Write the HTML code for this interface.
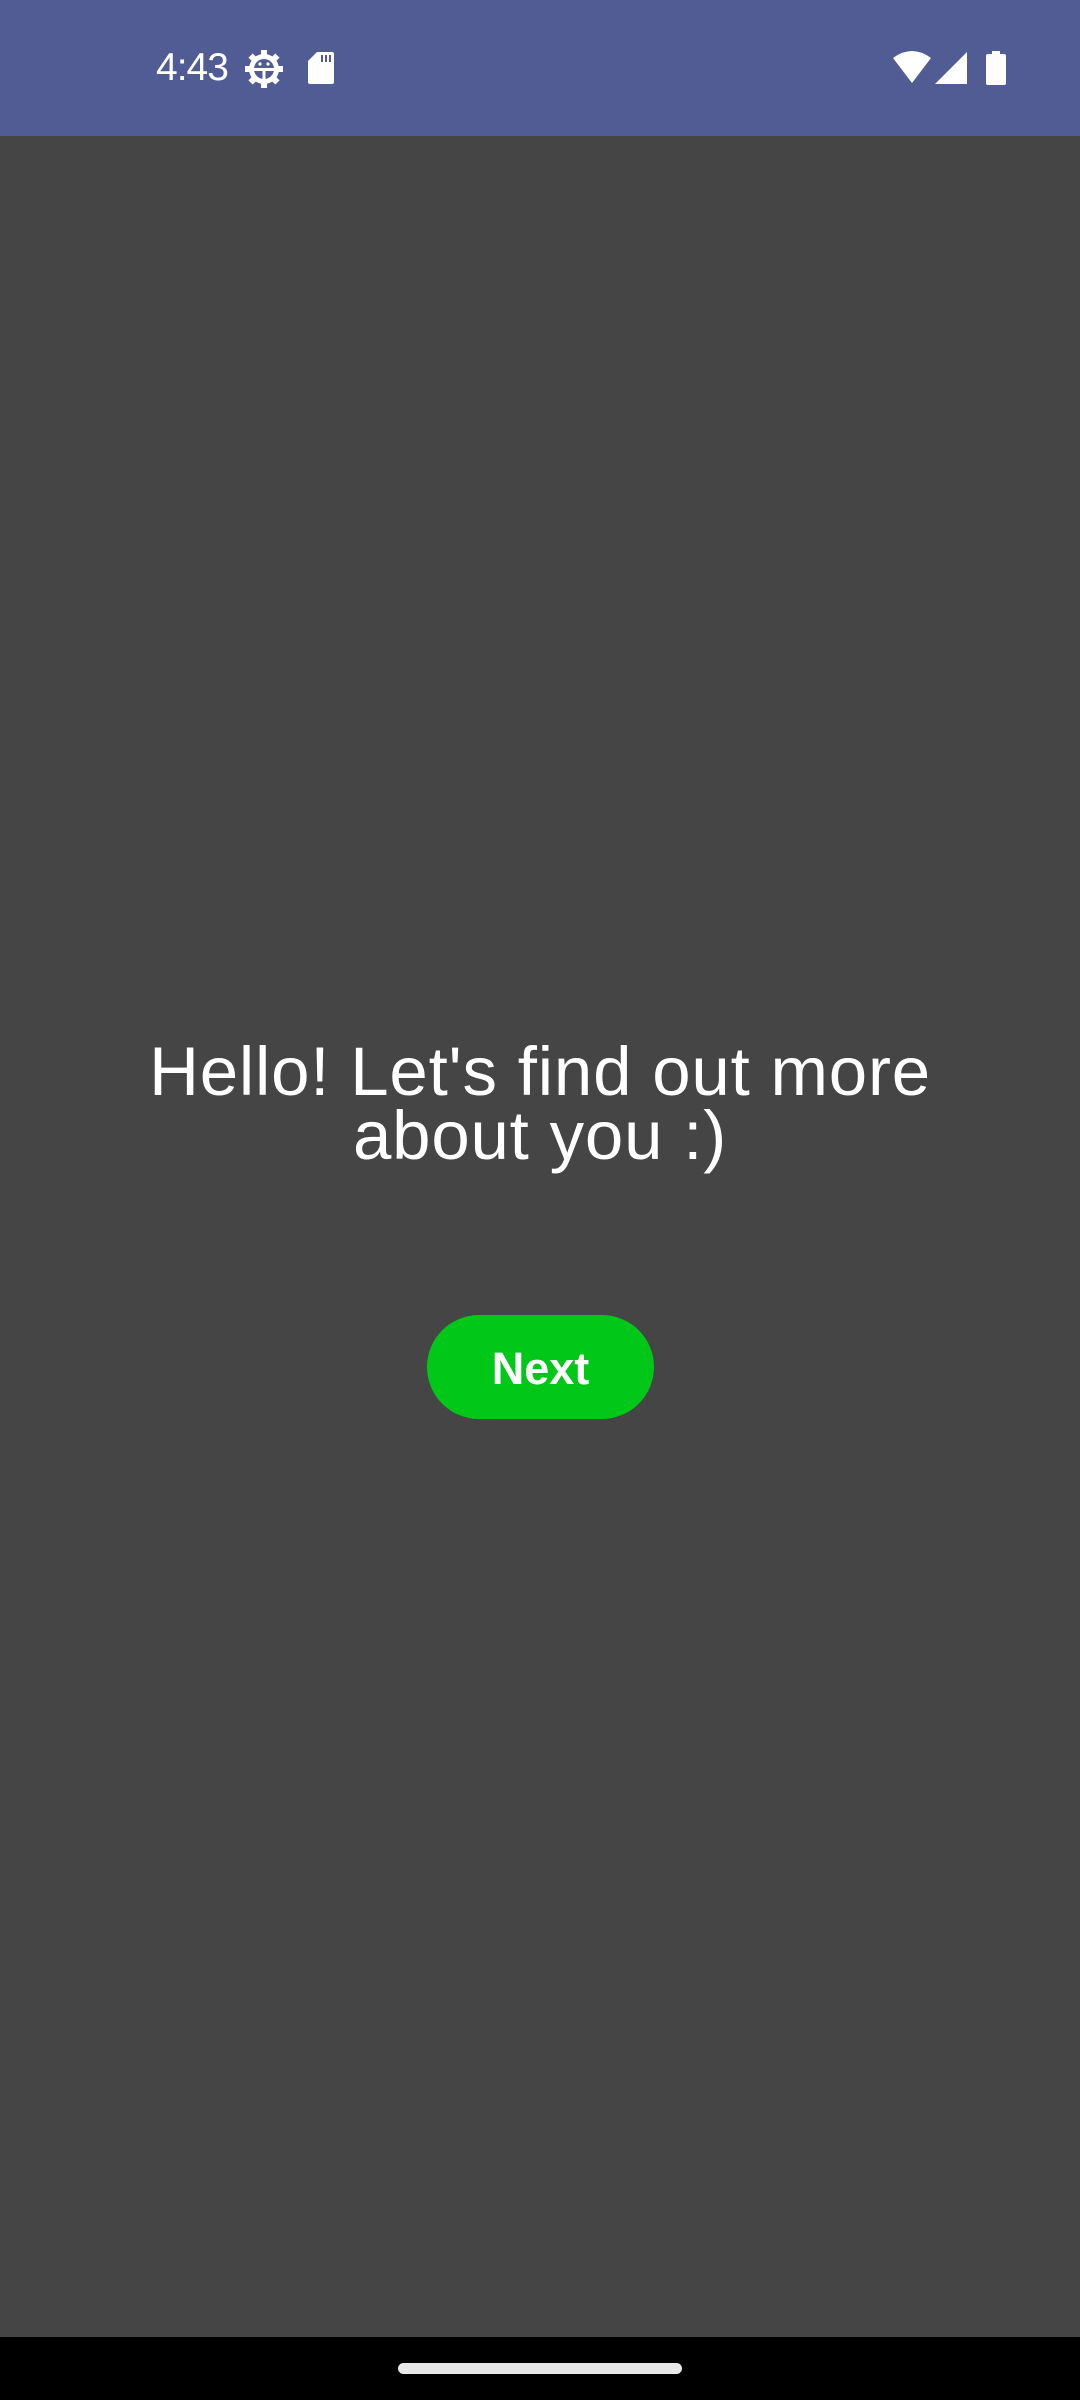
<!DOCTYPE html>
<html><head><meta charset="utf-8"><style>
html,body{margin:0;padding:0}
body{width:1080px;height:2400px;background:#454545;position:relative;overflow:hidden;font-family:"Liberation Sans",sans-serif}
.sb{position:absolute;left:0;top:0;width:1080px;height:136px;background:#515c94}
.time{position:absolute;left:156px;top:46px;font-size:39px;color:#fff;letter-spacing:-1px}
.title{position:absolute;left:0;width:1080px;top:1040px;text-align:center;color:#fff;font-size:69px;line-height:64px;letter-spacing:0.8px}
.btn{position:absolute;left:427px;top:1315px;width:227px;height:104px;border-radius:52px;background:#00c718;color:#fff;font-weight:bold;font-size:45px;text-align:center;line-height:108px}
.nav{position:absolute;left:0;top:2337px;width:1080px;height:63px;background:#000}
.handle{position:absolute;left:398px;top:2363px;width:284px;height:11px;border-radius:6px;background:#e8e8e8}
</style></head><body>
<div class="sb">
<div class="time">4:43</div>
<svg style="position:absolute;left:245px;top:50px" width="38" height="38" viewBox="0 0 38 38">
<g fill="#fff"><circle cx="19" cy="19" r="15"/>
<g transform="translate(19 19)"><rect x="-3" y="-19" width="6" height="6"/><rect x="-3" y="13" width="6" height="6"/><rect x="-19" y="-3" width="6" height="6"/><rect x="13" y="-3" width="6" height="6"/>
<g transform="rotate(45)"><rect x="-3" y="-19" width="6" height="6"/><rect x="-3" y="13" width="6" height="6"/><rect x="-19" y="-3" width="6" height="6"/><rect x="13" y="-3" width="6" height="6"/></g></g></g>
<circle cx="19" cy="19" r="10" fill="#515c94"/>
<rect x="8" y="18" width="22" height="3" fill="#fff"/><rect x="17.5" y="18" width="3" height="12" fill="#fff"/>
<circle cx="15" cy="14" r="1.6" fill="#fff"/><circle cx="23" cy="14" r="1.6" fill="#fff"/>
</svg>
<svg style="position:absolute;left:308px;top:52px" width="26" height="32" viewBox="0 0 26 32">
<path d="M9 0H24a2 2 0 0 1 2 2V30a2 2 0 0 1-2 2H2a2 2 0 0 1-2-2V9Z" fill="#fff"/>
<rect x="13" y="3" width="2" height="7" fill="#515c94"/><rect x="17" y="3" width="2" height="7" fill="#515c94"/><rect x="21" y="3" width="2" height="7" fill="#515c94"/>
</svg>
<svg style="position:absolute;left:893px;top:50px" width="38" height="33" viewBox="0 0 38 33">
<path d="M19 33L0 8Q19 -6 38 8Z" fill="#fff"/></svg>
<svg style="position:absolute;left:935px;top:52px" width="32" height="32" viewBox="0 0 32 32"><path d="M32 0V32H0Z" fill="#fff"/></svg>
<svg style="position:absolute;left:986px;top:51px" width="20" height="34" viewBox="0 0 20 34"><rect x="6" y="0" width="8" height="4" fill="#fff"/><rect x="0" y="3" width="20" height="31" rx="2" fill="#fff"/></svg>
</div>
<div class="title">Hello! Let's find out more<br>about you :)</div>
<div class="btn">Next</div>
<div class="nav"></div>
<div class="handle"></div>
</body></html>
